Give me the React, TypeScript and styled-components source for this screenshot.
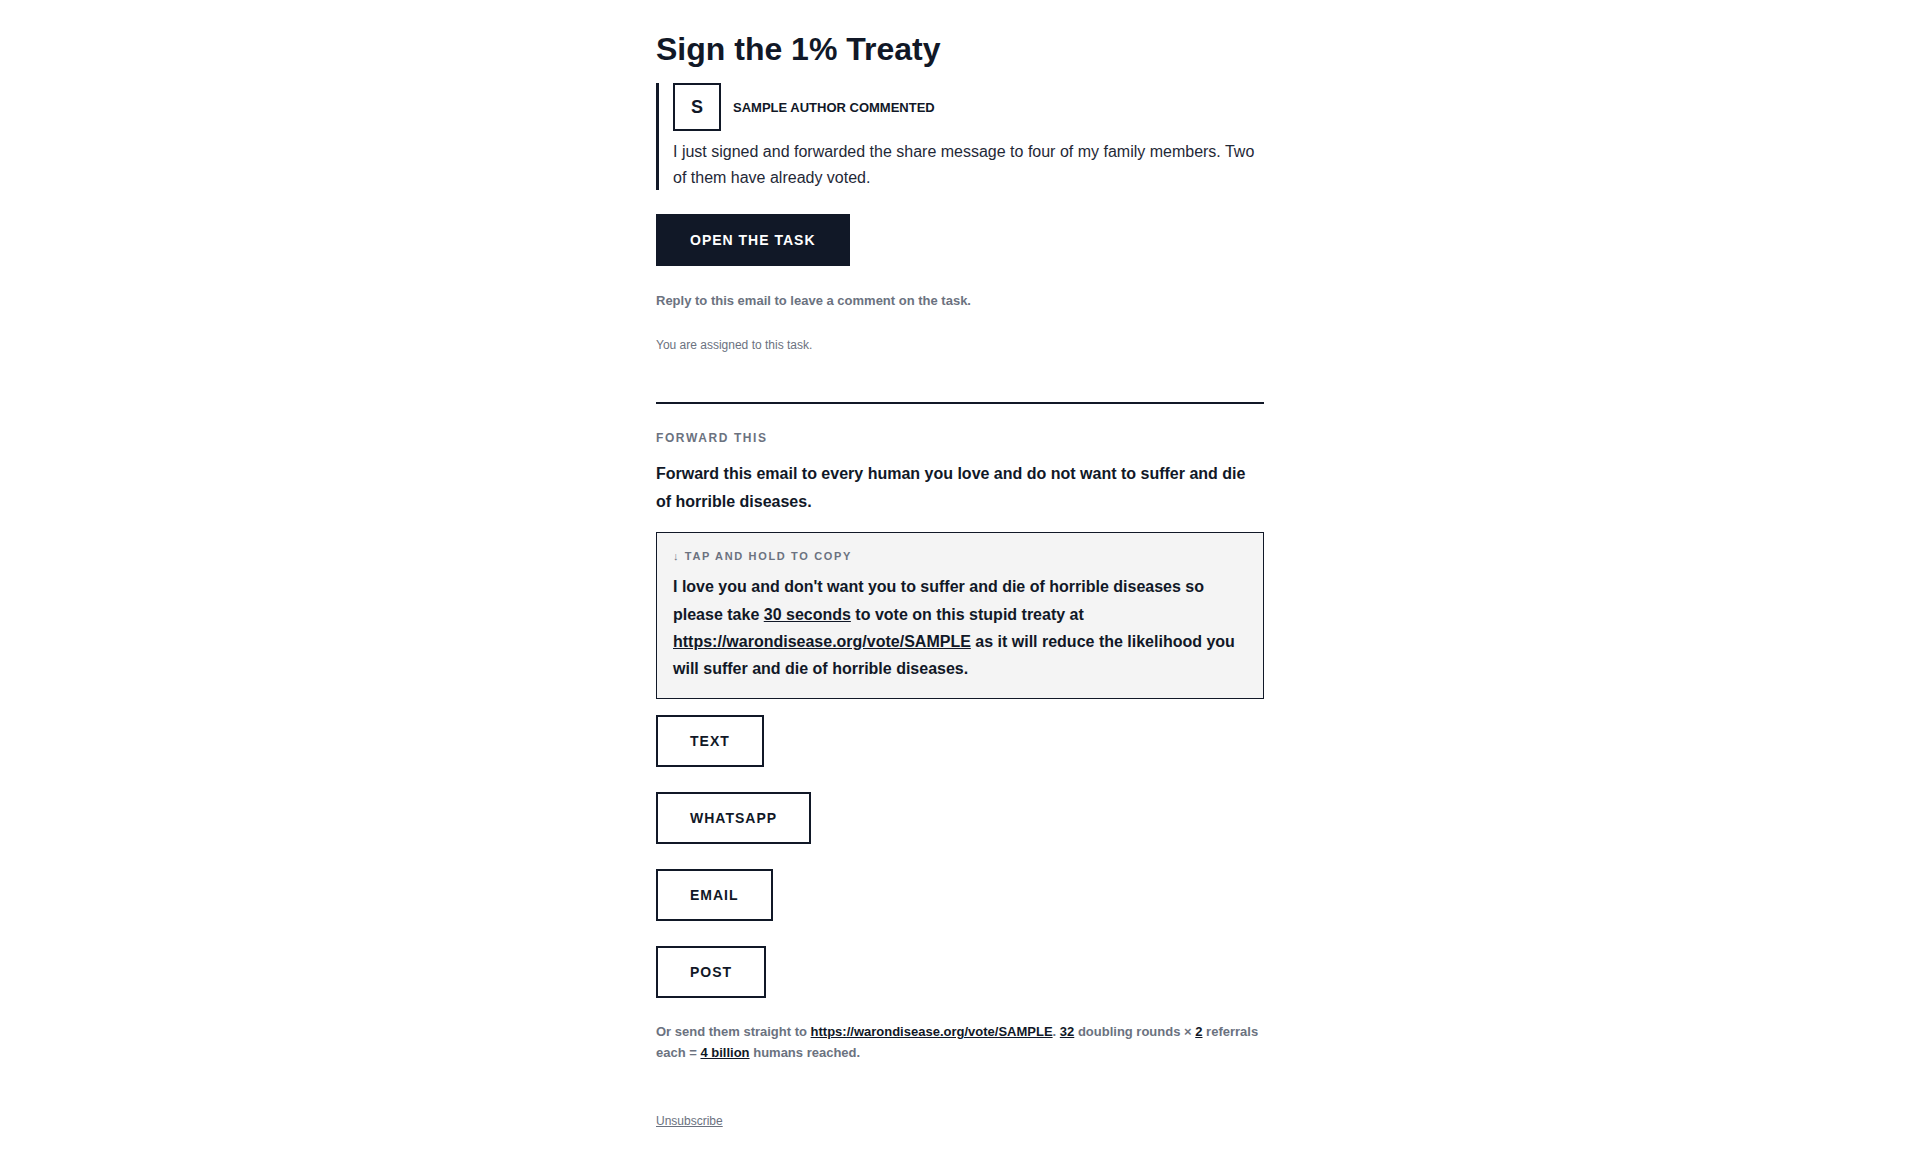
import React from 'react'
import styled, { createGlobalStyle } from 'styled-components'

const ink = '#111827'
const muted = '#6b7280'

const GlobalStyle = createGlobalStyle`
  html, body {
    margin: 0;
    padding: 0;
    background: #ffffff;
  }
  body {
    font-family: "Liberation Sans", Arial, Helvetica, sans-serif;
    color: ${ink};
  }
`

const Page = styled.main`
  width: 608px;
  margin: 0 auto;
  padding: 30px 0 40px;
`

const Title = styled.h1`
  margin: 0 0 15px;
  font-size: 32px;
  line-height: 38px;
  font-weight: 700;
  color: ${ink};
`

const Quote = styled.blockquote`
  margin: 0;
  padding-left: 14px;
  border-left: 3px solid ${ink};
`

const QuoteHead = styled.div`
  display: flex;
  align-items: center;
  gap: 12px;
`

const Avatar = styled.div`
  box-sizing: border-box;
  width: 48px;
  height: 48px;
  border: 2px solid ${ink};
  display: flex;
  align-items: center;
  justify-content: center;
  font-size: 18px;
  font-weight: 700;
`

const Author = styled.span`
  font-size: 13px;
  font-weight: 700;
  text-transform: uppercase;
`

const QuoteText = styled.p`
  margin: 8px 0 0;
  font-size: 16px;
  line-height: 1.6;
  color: #1f2937;
`

const Button = styled.a<{ $variant?: 'solid' | 'outline' }>`
  display: block;
  width: fit-content;
  box-sizing: border-box;
  padding: 14px 32px;
  border: 2px solid ${ink};
  background: ${(p) => (p.$variant === 'outline' ? '#ffffff' : ink)};
  color: ${(p) => (p.$variant === 'outline' ? ink : '#ffffff')};
  font-size: 14px;
  line-height: 20px;
  font-weight: 700;
  letter-spacing: 1px;
  text-transform: uppercase;
  text-decoration: none;
  cursor: pointer;
`

const PrimaryWrap = styled.div`
  margin-top: 24px;
`

const Note = styled.p`
  margin: 25px 0 0;
  font-size: 13px;
  line-height: 1.6;
  font-weight: 700;
  color: ${muted};
`

const SmallNote = styled.p`
  margin: 24px 0 0;
  font-size: 12px;
  line-height: 1.5;
  color: ${muted};
`

const Divider = styled.hr`
  margin: 48px 0 0;
  border: 0;
  height: 2px;
  background: ${ink};
`

const Eyebrow = styled.div`
  margin-top: 25px;
  font-size: 12px;
  line-height: 1.5;
  font-weight: 700;
  letter-spacing: 1.6px;
  text-transform: uppercase;
  color: ${muted};
`

const Lead = styled.p`
  margin: 13px 0 0;
  font-size: 16px;
  line-height: 1.75;
  font-weight: 700;
  color: ${ink};
`

const CopyBox = styled.div`
  margin-top: 16px;
  padding: 16px;
  border: 1px solid ${ink};
  background: #f4f4f4;
`

const CopyLabel = styled.div`
  margin-bottom: 9px;
  font-size: 11px;
  line-height: 1.4;
  font-weight: 700;
  letter-spacing: 1.65px;
  text-transform: uppercase;
  color: ${muted};
`

const CopyText = styled.p`
  margin: 0;
  font-size: 16px;
  line-height: 1.7;
  font-weight: 700;
  color: ${ink};
`

const Link = styled.a`
  color: ${ink};
  text-decoration: underline;
  font-weight: 700;
`

const ShareList = styled.div`
  margin-top: 16px;
  display: flex;
  flex-direction: column;
  align-items: flex-start;
  gap: 25px;
`

const Footnote = styled.p`
  margin: 24px 0 0;
  font-size: 13px;
  line-height: 1.6;
  font-weight: 700;
  color: ${muted};
`

const Unsubscribe = styled.a`
  display: block;
  width: fit-content;
  margin-top: 48px;
  font-size: 12px;
  line-height: 1.5;
  color: ${muted};
  text-decoration: underline;
`

const shareTargets = ['Text', 'WhatsApp', 'Email', 'Post']
const voteUrl = 'https://warondisease.org/vote/SAMPLE'

export default function App() {
  return (
    <>
      <GlobalStyle />
      <Page>
        <Title>Sign the 1% Treaty</Title>

        <Quote>
          <QuoteHead>
            <Avatar>S</Avatar>
            <Author>Sample Author commented</Author>
          </QuoteHead>
          <QuoteText>
            I just signed and forwarded the share message to four of my family members. Two of them have
            already voted.
          </QuoteText>
        </Quote>

        <PrimaryWrap>
          <Button>Open the task</Button>
        </PrimaryWrap>

        <Note>Reply to this email to leave a comment on the task.</Note>
        <SmallNote>You are assigned to this task.</SmallNote>

        <Divider />

        <Eyebrow>Forward this</Eyebrow>
        <Lead>Forward this email to every human you love and do not want to suffer and die of horrible diseases.</Lead>

        <CopyBox>
          <CopyLabel>↓ Tap and hold to copy</CopyLabel>
          <CopyText>
            I love you and don't want you to suffer and die of horrible diseases so please take{' '}
            <Link>30 seconds</Link> to vote on this stupid treaty at <Link>{voteUrl}</Link> as it will reduce the
            likelihood you will suffer and die of horrible diseases.
          </CopyText>
        </CopyBox>

        <ShareList>
          {shareTargets.map((t) => (
            <Button key={t} $variant="outline">
              {t}
            </Button>
          ))}
        </ShareList>

        <Footnote>
          Or send them straight to <Link>{voteUrl}</Link>. <Link>32</Link> doubling rounds × <Link>2</Link> referrals
          each = <Link>4 billion</Link> humans reached.
        </Footnote>

        <Unsubscribe>Unsubscribe</Unsubscribe>
      </Page>
    </>
  )
}
